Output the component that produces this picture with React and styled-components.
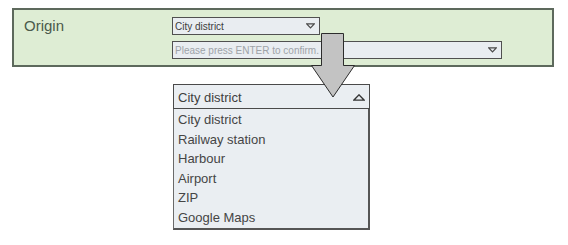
import React from 'react'
import styled, { createGlobalStyle } from 'styled-components'

const GlobalStyle = createGlobalStyle`
  body {
    margin: 0;
    background: #ffffff;
    font-family: "Liberation Sans", Arial, sans-serif;
  }
`

const options = ['City district', 'Railway station', 'Harbour', 'Airport', 'ZIP', 'Google Maps']

const Page = styled.div`
  position: relative;
  width: 568px;
  height: 245px;
  overflow: hidden;
`

const Panel = styled.div`
  margin: 8px 0 0 12px;
  width: 542px;
  height: 59px;
  box-sizing: border-box;
  border: 2px solid #5d695c;
  background: #deedd4;
  display: flex;
  padding: 7px 0 0 10px;
`

const Label = styled.div`
  width: 148px;
  font-size: 15px;
  line-height: 18px;
  color: #4b5a4b;
`

const Fields = styled.div`
  display: flex;
  flex-direction: column;
  gap: 6px;
`

const Field = styled.div`
  box-sizing: border-box;
  width: ${p => p.$width}px;
  height: 18px;
  border: 1px solid #505050;
  background: #e9edf1;
  display: flex;
  align-items: center;
  justify-content: space-between;
  padding: 0 4px 0 2px;
  font-size: 10px;
  color: ${p => (p.$placeholder ? '#9ea3a8' : '#3c3c3c')};
`

const Dropdown = styled.div`
  margin: 17px 0 0 173px;
  width: 197px;
`

const Header = styled.div`
  box-sizing: border-box;
  height: 25px;
  border: 1px solid #4a4a4a;
  background: #eaeef2;
  display: flex;
  align-items: center;
  justify-content: space-between;
  padding: 1px 4px 0 4px;
  font-size: 13px;
  color: #3e3e3e;
`

const List = styled.div`
  box-sizing: border-box;
  height: 121px;
  border-left: 1px solid #6a6a6a;
  border-right: 2px solid #555555;
  border-bottom: 2px solid #555555;
  background: #eaeef2;
  padding-top: 1px;
`

const Item = styled.div`
  height: 19.6px;
  line-height: 19.6px;
  padding-left: 4px;
  font-size: 13px;
  color: #454545;
`

const Arrow = styled.svg`
  position: absolute;
  left: 0;
  top: 0;
  pointer-events: none;
`

const DownIcon = () => (
  <svg width="9" height="6" viewBox="0 0 9 6">
    <path d="M0.7 0.8 H8.3 L4.5 4.8 Z" fill="none" stroke="#4a4a4a" strokeWidth="1.2" />
  </svg>
)

const UpIcon = () => (
  <svg width="12" height="7" viewBox="0 0 12 7">
    <path d="M0.8 6.2 H11.2 L6 0.8 Z" fill="none" stroke="#333" strokeWidth="1.3" />
  </svg>
)

export default function App() {
  return (
    <Page>
      <GlobalStyle />
      <Panel>
        <Label>Origin</Label>
        <Fields>
          <Field $width={148}>
            <span>City district</span>
            <DownIcon />
          </Field>
          <Field $width={330} $placeholder>
            <span>Please press ENTER to confirm.</span>
            <DownIcon />
          </Field>
        </Fields>
      </Panel>
      <Dropdown>
        <Header>
          <span>City district</span>
          <UpIcon />
        </Header>
        <List>
          {options.map(o => (
            <Item key={o}>{o}</Item>
          ))}
        </List>
      </Dropdown>
      <Arrow width="568" height="245">
        <polygon
          points="321.5,33.5 343.5,33.5 343.5,65.5 354.5,65.5 333,97 311.5,65.5 321.5,65.5"
          fill="#c3c3c3"
          stroke="#2c2c2c"
          strokeWidth="1"
        />
      </Arrow>
    </Page>
  )
}
